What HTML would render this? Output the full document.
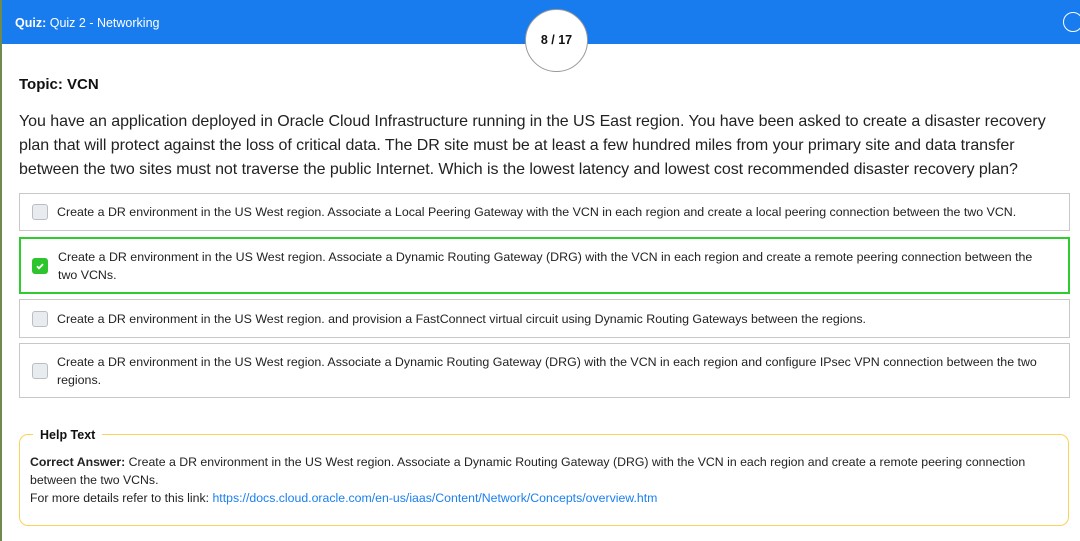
<!DOCTYPE html>
<html><head><meta charset="utf-8"><style>
*{box-sizing:border-box;margin:0;padding:0}
body{width:1080px;height:541px;overflow:hidden;background:#fff;font-family:"Liberation Sans",Arial,sans-serif;color:#222;position:relative}
.lb{position:absolute;left:0;top:0;width:2px;height:541px;background:#6f8a4f}
.hdr{position:absolute;left:2px;top:0;width:1078px;height:44px;background:#187cef;color:#fff;font-size:12.5px;padding:16px 0 0 13px}
.circ{position:absolute;left:525px;top:9px;width:63px;height:63px;border-radius:50%;background:#fff;border:1px solid #999;font-weight:bold;font-size:12.5px;text-align:center;line-height:61px;color:#111}
.rc{position:absolute;left:1061px;top:12px;width:20px;height:20px;border-radius:50%;border:1.5px solid #fff}
.topic{position:absolute;left:19px;top:76px;font-size:15px;font-weight:bold;color:#111}
.q{position:absolute;left:19px;top:110px;width:1045px;font-size:16px;line-height:24px;color:#222;letter-spacing:-0.05px}
.opt{position:absolute;left:19px;width:1051px;border:1px solid #c8c8c8;font-size:12.4px;line-height:18px;padding:0 30px 0 37px;display:flex;align-items:center;color:#222}
.cb{position:absolute;left:12px;width:16px;height:16px;border-radius:3px;border:1px solid #b8bec4;background:#e9ecef}
.opt.g{border:2px solid #2fcc2f;padding-left:37px}
.opt.g .cb{left:11px;background:#2dc42d;border-color:#2dc42d}
.help{position:absolute;left:19px;top:434px;width:1050px;height:92px;border:1px solid #fcd35a;border-radius:9px;font-size:12.3px;line-height:18px;padding:18px 10px 0 10px}
.lg{position:absolute;left:13px;top:-9px;background:#fff;padding:0 7px;font-weight:bold;font-size:12.5px;color:#111}
a{color:#1a7ff0;text-decoration:none}
</style></head><body>
<div class="lb"></div>
<div class="hdr"><b>Quiz:</b> Quiz 2 - Networking<div class="rc"></div></div>
<div class="circ">8 / 17</div>
<div class="topic">Topic: VCN</div>
<div class="q">You have an application deployed in Oracle Cloud Infrastructure running in the US East region. You have been asked to create a disaster recovery plan that will protect against the loss of critical data. The DR site must be at least a few hundred miles from your primary site and data transfer between the two sites must not traverse the public Internet. Which is the lowest latency and lowest cost recommended disaster recovery plan?</div>
<div class="opt" style="top:193px;height:38px"><span class="cb"></span>Create a DR environment in the US West region. Associate a Local Peering Gateway with the VCN in each region and create a local peering connection between the two VCN.</div>
<div class="opt g" style="top:237px;height:57px"><span class="cb"><svg width="14" height="14" viewBox="0 0 14 14" style="position:absolute;left:0;top:0"><path d="M4 7.3l2 2 4-4.2" stroke="#fff" stroke-width="1.8" fill="none"/></svg></span>Create a DR environment in the US West region. Associate a Dynamic Routing Gateway (DRG) with the VCN in each region and create a remote peering connection between the two VCNs.</div>
<div class="opt" style="top:299px;height:39px"><span class="cb"></span>Create a DR environment in the US West region. and provision a FastConnect virtual circuit using Dynamic Routing Gateways between the regions.</div>
<div class="opt" style="top:343px;height:55px"><span class="cb"></span>Create a DR environment in the US West region. Associate a Dynamic Routing Gateway (DRG) with the VCN in each region and configure IPsec VPN connection between the two regions.</div>
<div class="help"><span class="lg">Help Text</span><b>Correct Answer:</b> Create a DR environment in the US West region. Associate a Dynamic Routing Gateway (DRG) with the VCN in each region and create a remote peering connection between the two VCNs.<br>For more details refer to this link: <a>https://docs.cloud.oracle.com/en-us/iaas/Content/Network/Concepts/overview.htm</a></div>
</body></html>
